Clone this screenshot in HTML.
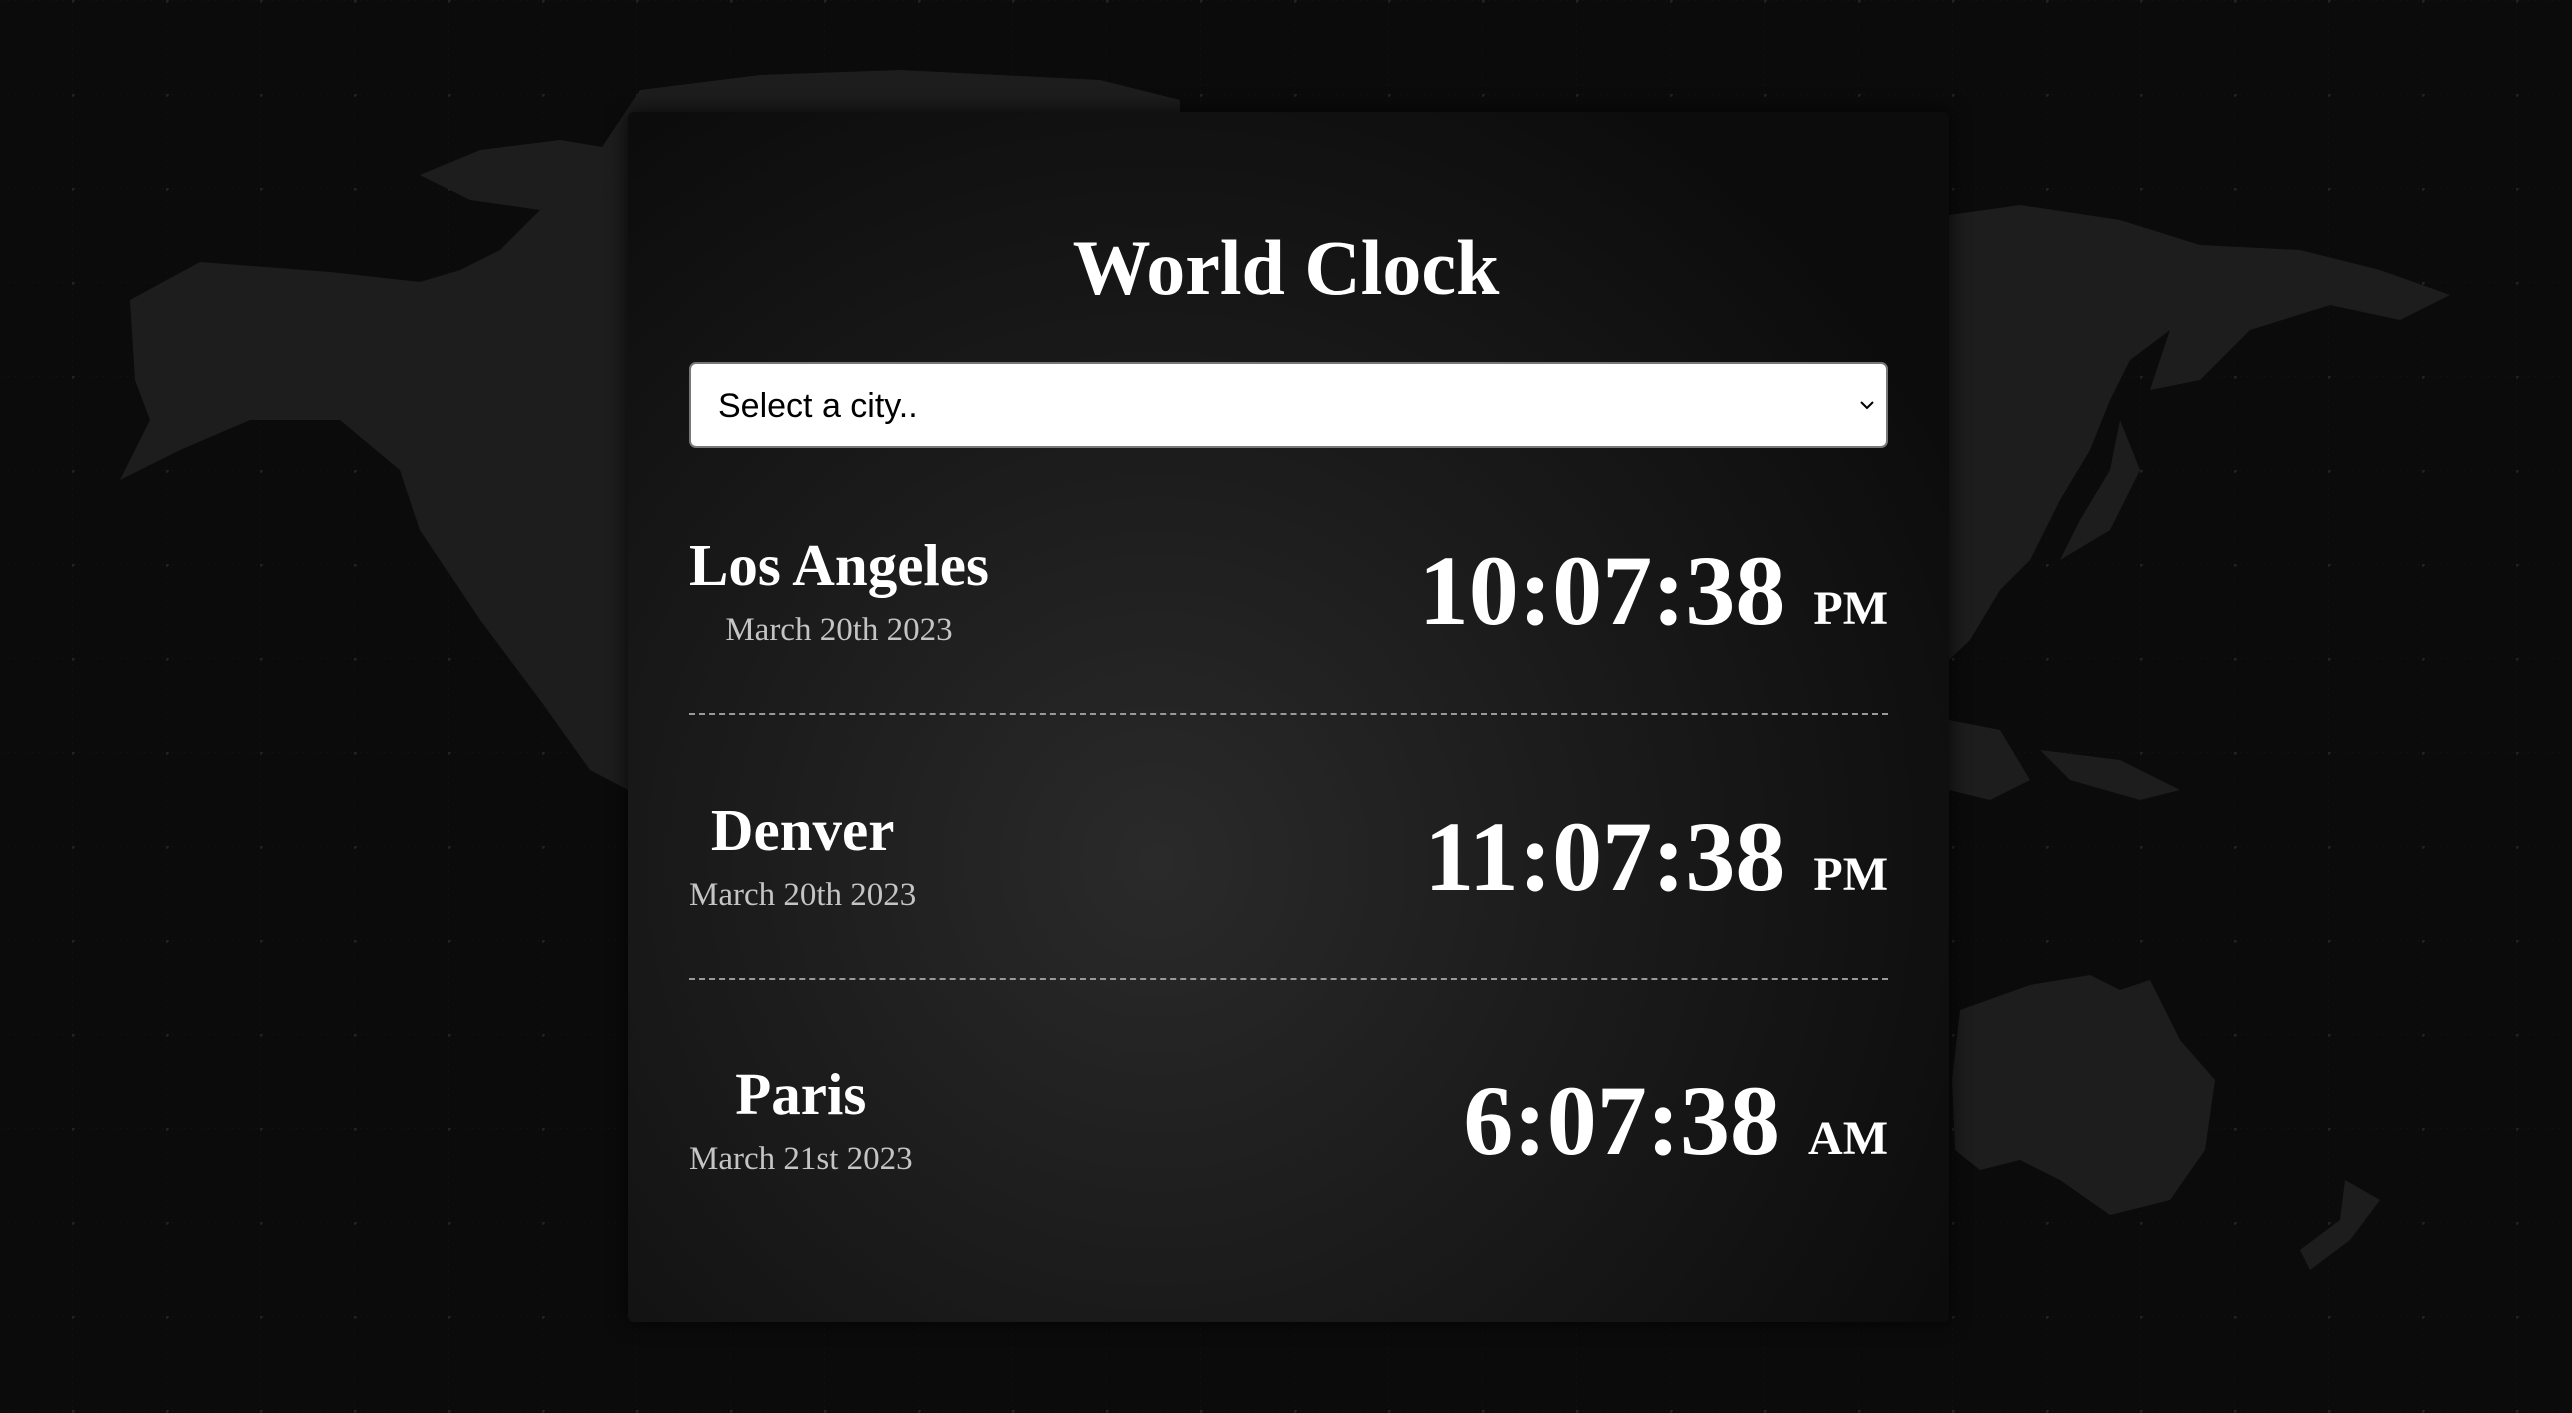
<!DOCTYPE html>
<html><head><meta charset="utf-8">
<style>
html,body{margin:0;padding:0;width:2572px;height:1413px;overflow:hidden;background:#0b0b0b;}
body{position:relative;font-family:"Liberation Serif",serif;color:#fff;}
.bg{position:absolute;left:0;top:0;}
.card{position:absolute;left:628px;top:112px;width:1321px;height:1210px;border-radius:6px;
background:radial-gradient(ellipse 900px 900px at 40% 62%,#2a2a2a 0%,#1c1c1c 45%,#0c0c0c 100%);
box-shadow:0 0 20px rgba(0,0,0,.8);}
.abs{position:absolute;line-height:1;white-space:nowrap;}
.title{left:0;width:2572px;text-align:center;top:229px;font-size:78px;font-weight:bold;}
.sel{position:absolute;left:689px;top:362px;width:1195px;height:82px;background:#fff;border:2px solid #777;border-radius:7px;}
.sel span{position:absolute;left:27px;top:25px;font-family:"Liberation Sans",sans-serif;font-size:34px;color:#000;line-height:1;}
.sel svg{position:absolute;right:10px;top:35px;}
.city{position:absolute;left:689px;text-align:center;}
.city .n{font-size:59px;line-height:1;font-weight:bold;}
.city .d{font-size:33px;color:#c4c4c4;line-height:1;margin-top:19px;}
.time{position:absolute;right:684px;font-size:100px;line-height:100px;white-space:nowrap;font-weight:bold;}
.time small{font-size:48px;margin-left:28px;}
.hr{position:absolute;left:689px;width:1199px;border-top:2px dashed #9a9a9a;height:0;}
</style></head><body>
<svg class="bg" width="2572" height="1413" viewBox="0 0 2572 1413">
<defs><pattern id="g" width="94" height="94" patternUnits="userSpaceOnUse" x="72" y="0">
<line x1="0" y1="0" x2="0" y2="94" stroke="#101010" stroke-width="2" stroke-dasharray="2 4"/>
<line x1="0" y1="0" x2="94" y2="0" stroke="#101010" stroke-width="2" stroke-dasharray="2 4"/>
<circle cx="0" cy="0" r="3" fill="#222"/></pattern></defs>
<rect width="2572" height="1413" fill="url(#g)"/>
<g fill="#1d1d1d">
<path d="M130 300 L200 262 L330 272 L420 282 L460 270 L500 250 L540 210 L600 150 L640 90 L760 75 L900 70 L1100 80 L1180 100 L1180 120 L628 130 L628 790 L590 770 L540 700 L480 620 L420 530 L400 470 L340 420 L250 420 L180 450 L120 480 L150 420 L135 380 Z"/>
<path d="M420 175 L480 150 L560 140 L620 150 L600 200 L540 210 L470 200 Z"/>
<path d="M1949 215 L2020 205 L2120 220 L2200 245 L2300 250 L2380 270 L2450 295 L2400 320 L2330 305 L2250 330 L2200 380 L2150 390 L2170 330 L2130 360 L2110 400 L2090 450 L2060 500 L2030 560 L2000 590 L1970 640 L1949 660 Z"/>
<path d="M2120 420 L2140 470 L2110 530 L2060 560 L2080 520 L2110 470 Z"/>
<path d="M1949 720 L2000 730 L2030 780 L1990 800 L1949 790 Z"/>
<path d="M2040 750 L2120 760 L2180 790 L2140 800 L2070 780 Z"/>
<path d="M1960 1010 L2030 985 L2090 975 L2120 990 L2150 980 L2180 1040 L2215 1080 L2205 1150 L2170 1200 L2110 1215 L2060 1180 L2020 1160 L1980 1170 L1955 1150 L1952 1080 Z"/>
<path d="M2345 1180 L2380 1200 L2350 1240 L2310 1270 L2300 1250 L2340 1220 Z"/>
</g>
</svg>
<div class="card"></div>
<div class="abs title">World Clock</div>
<div class="sel"><span>Select a city..</span>
<svg width="18" height="12" viewBox="0 0 18 12"><path d="M3 3 L9 9 L15 3" stroke="#000" stroke-width="2" fill="none"/></svg></div>

<div class="city" style="top:536px"><div class="n">Los Angeles</div><div class="d">March 20th 2023</div></div>
<div class="time" style="top:541px">10:07:38<small>PM</small></div>
<div class="hr" style="top:713px"></div>

<div class="city" style="top:801px"><div class="n">Denver</div><div class="d">March 20th 2023</div></div>
<div class="time" style="top:807px">11:07:38<small>PM</small></div>
<div class="hr" style="top:978px"></div>

<div class="city" style="top:1065px"><div class="n">Paris</div><div class="d">March 21st 2023</div></div>
<div class="time" style="top:1071px">6:07:38<small>AM</small></div>
</body></html>
